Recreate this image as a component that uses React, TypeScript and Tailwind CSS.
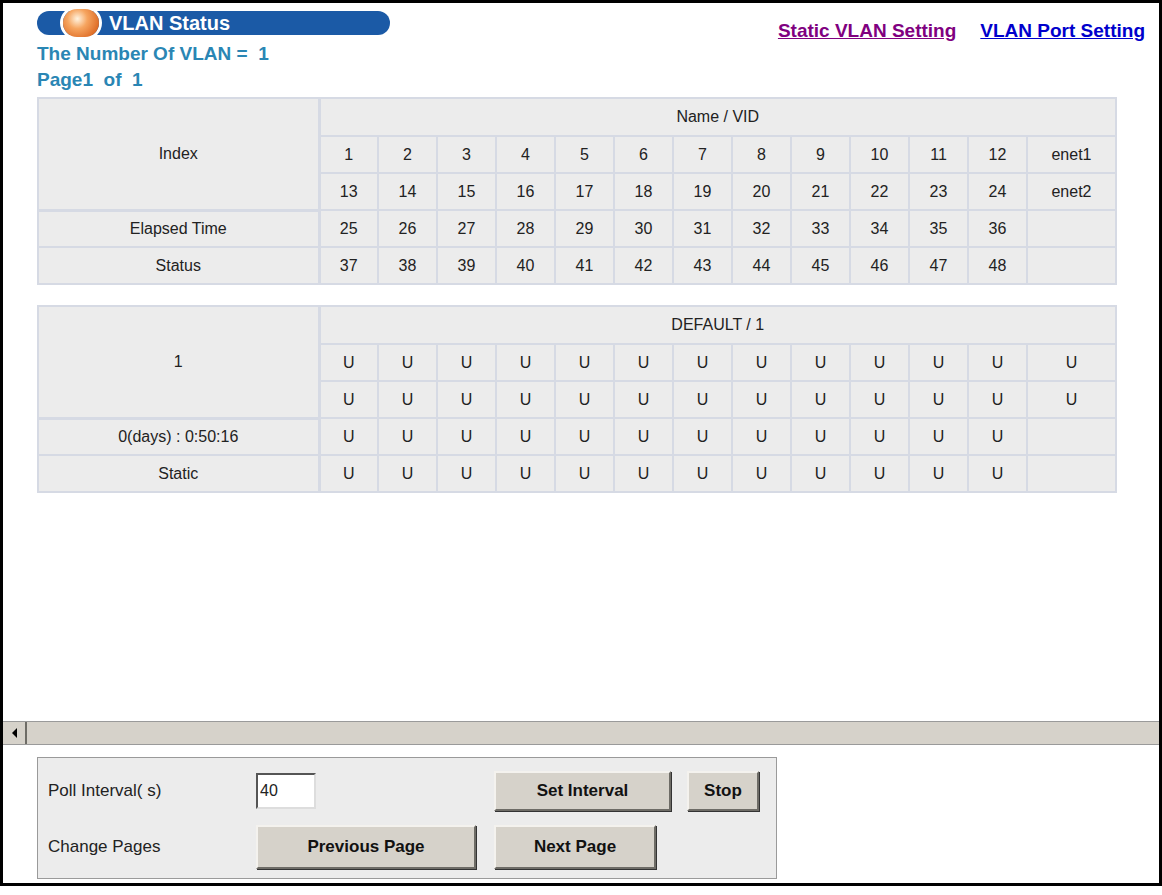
import React from "react"

const cols = Array.from({ length: 12 }, (_, i) => i)

function Cell({ children, className = "", rowSpan, colSpan }: { children?: React.ReactNode; className?: string; rowSpan?: number; colSpan?: number }) {
  return (
    <td
      rowSpan={rowSpan}
      colSpan={colSpan}
      className={`border-2 border-[#d6dae4] bg-[#ececec] text-center text-[16px] text-[#222] ${className}`}
    >
      {children}
    </td>
  )
}

function Grid({ head, index, time, status, rows }: { head: string; index: string; time: string; status: string; rows: string[][] }) {
  return (
    <table className="w-[1080px] table-fixed border-collapse">
      <colgroup>
        <col className="w-[281px]" />
        {cols.map((c) => (
          <col key={c} className="w-[59px]" />
        ))}
        <col />
      </colgroup>
      <tbody>
        <tr className="h-[38px]">
          <Cell rowSpan={3} className="border-r-[3px] border-b-[3px]">
            {index}
          </Cell>
          <Cell colSpan={13}>{head}</Cell>
        </tr>
        {rows.map((r, i) => (
          <tr key={i} className="h-[37px]">
            {i === 2 && <Cell className="border-r-[3px]">{time}</Cell>}
            {i === 3 && <Cell className="border-r-[3px]">{status}</Cell>}
            {r.map((v, j) => (
              <Cell key={j}>{v}</Cell>
            ))}
          </tr>
        ))}
      </tbody>
    </table>
  )
}

function Btn({ children, className = "" }: { children: React.ReactNode; className?: string }) {
  return (
    <button className={`h-[40px] border-2 border-t-[#f4f2ee] border-l-[#f4f2ee] border-r-[#6e6c66] border-b-[#6e6c66] bg-[#d6d2ca] text-[17px] font-bold text-[#111] shadow-[1px_1px_0_#333] ${className}`}>
      {children}
    </button>
  )
}

export default function App() {
  const n = (start: number, extra: string) => [...cols.map((c) => String(start + c)), extra]
  const u = (extra: string) => [...cols.map(() => "U"), extra]
  return (
    <div className="h-[886px] w-[1162px] border-[3px] border-black bg-white font-[Liberation_Sans,Arial,sans-serif]">
      <div className="flex items-start justify-between pl-[34px] pr-[14px] pt-[8px]">
        <div>
          <div className="relative flex h-[24px] w-[353px] items-center rounded-full bg-[#1b5aa6] pl-[72px] text-[20px] font-bold leading-none text-white">
            <span className="absolute left-[26px] top-[-2px] h-[28px] w-[36px] rounded-full bg-[radial-gradient(circle_at_40%_35%,#fff3e0_0%,#f6a560_35%,#e0702a_75%,#c85a1a_100%)] ring-[3px] ring-white" />
            VLAN Status
          </div>
          <div className="mt-[6px] text-[19px] font-bold leading-[26px] text-[#2a86b4]">The Number Of VLAN =&nbsp; 1</div>
          <div className="text-[19px] font-bold leading-[26px] text-[#2a86b4]">Page1&nbsp; of&nbsp; 1</div>
        </div>
        <div className="mt-[6px] flex gap-[24px] text-[19px] font-bold">
          <a className="text-[#800080] underline">Static VLAN Setting</a>
          <a className="text-[#0000cc] underline">VLAN Port Setting</a>
        </div>
      </div>

      <div className="ml-[34px] mt-[4px] flex flex-col gap-[20px]">
        <Grid
          head="Name / VID"
          index="Index"
          time="Elapsed Time"
          status="Status"
          rows={[n(1, "enet1"), n(13, "enet2"), n(25, ""), n(37, "")]}
        />
        <Grid
          head="DEFAULT / 1"
          index="1"
          time="0(days) : 0:50:16"
          status="Static"
          rows={[u("U"), u("U"), u(""), u("")]}
        />
      </div>

      <div className="mt-[228px] flex h-[24px] w-full border-y border-[#9a9a9a] bg-[#d6d2ca]">
        <div className="flex w-[24px] items-center justify-center border-r-2 border-r-[#6e6c66] bg-[#d6d2ca]">
          <span className="h-0 w-0 border-y-[5px] border-r-[5px] border-y-transparent border-r-black" />
        </div>
      </div>

      <div className="ml-[34px] mt-[12px] w-[740px] border border-[#9a9a9a] bg-[#ececec] px-[10px] py-[8px] text-[17px] text-[#222]">
        <div className="flex h-[50px] items-center">
          <span className="w-[208px]">Poll Interval( s)</span>
          <input
            defaultValue="40"
            className="h-[36px] w-[60px] border-2 border-t-[#555] border-l-[#555] border-r-[#ddd] border-b-[#ddd] bg-white px-[2px] text-[16px]"
          />
          <Btn className="ml-[178px] w-[177px]">Set Interval</Btn>
          <Btn className="ml-[16px] w-[72px]">Stop</Btn>
        </div>
        <div className="mt-[8px] flex h-[46px] items-center">
          <span className="w-[208px]">Change Pages</span>
          <Btn className="h-[44px] w-[220px]">Previous Page</Btn>
          <Btn className="ml-[18px] h-[44px] w-[162px]">Next Page</Btn>
        </div>
      </div>
    </div>
  )
}
